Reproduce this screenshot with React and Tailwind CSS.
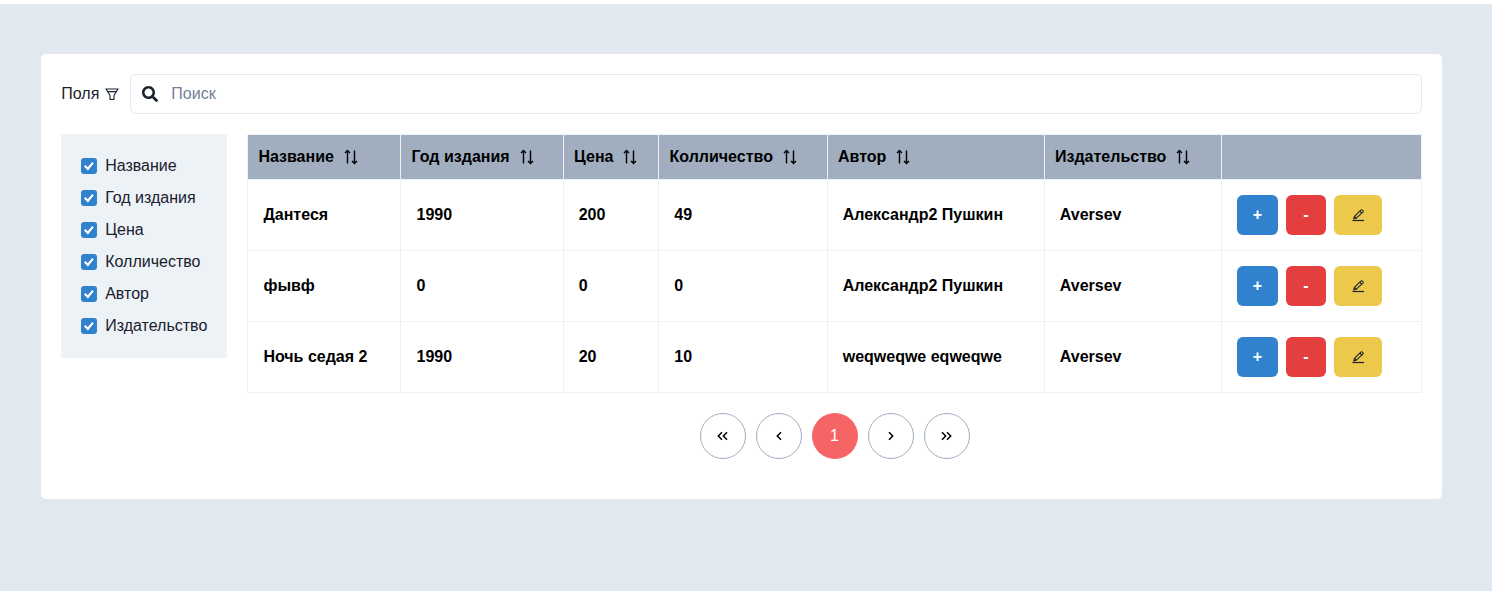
const fields = ['Название', 'Год издания', 'Цена', 'Колличество', 'Автор', 'Издательство']

const columns = [
    { title: 'Название', width: 'w-[153px]', head: 'pl-[10.4px]', cell: 'pl-[15.4px]' },
    { title: 'Год издания', width: 'w-[163px]', head: 'pl-[10.5px]', cell: 'pl-[15.5px]' },
    { title: 'Цена', width: 'w-[95px]', head: 'pl-[10.1px]', cell: 'pl-[14.7px]' },
    { title: 'Колличество', width: 'w-[169px]', head: 'pl-[10.5px]', cell: 'pl-[15.3px]' },
    { title: 'Автор', width: 'w-[217px]', head: 'pl-2.5', cell: 'pl-[14.7px]' },
    { title: 'Издательство', width: 'w-[177px]', head: 'pl-2.5', cell: 'pl-[14.8px]' },
]

const rows = [
    ['Дантеся', '1990', '200', '49', 'Александр2 Пушкин', 'Aversev'],
    ['фывф', '0', '0', '0', 'Александр2 Пушкин', 'Aversev'],
    ['Ночь седая 2', '1990', '20', '10', 'weqweqwe eqweqwe', 'Aversev'],
]

const SortIcon = () => (
    <svg width="16" height="16" viewBox="0 0 16 16" fill="none" stroke="#000" strokeWidth="1.4" className="ml-[9px]">
        <path d="M4.500 14.500V1.500M2 4l2.500-2.500L7 4" />
        <path d="M11.500 1.500v13M9 12l2.500 2.500L14 12" />
    </svg>
)

const FilterIcon = () => (
    <svg width="14" height="14" viewBox="0 0 14 14" fill="none" stroke="#1a202c" strokeWidth="1.100" className="ml-[6px]">
        <path d="M1 2h12L9 8.500v4H5v-4zM2.600 4.600h8.800" />
    </svg>
)

const SearchIcon = () => (
    <svg width="16" height="16" viewBox="0 0 512 512" fill="#1a202c">
        <path d="M505 442.700L405.300 343c-4.500-4.500-10.600-7-17-7H372c27.600-35.300 44-79.700 44-128C416 93.100 322.900 0 208 0S0 93.100 0 208s93.100 208 208 208c48.300 0 92.700-16.400 128-44v16.300c0 6.400 2.500 12.500 7 17l99.700 99.700c9.400 9.400 24.600 9.400 33.900 0l28.300-28.300c9.400-9.400 9.400-24.600.1-34zM208 336c-70.700 0-128-57.200-128-128 0-70.700 57.200-128 128-128 70.700 0 128 57.200 128 128 0 70.700-57.200 128-128 128z" />
    </svg>
)

const PencilIcon = () => (
    <svg width="14" height="14" viewBox="0 0 14 14" fill="none" stroke="#1a202c" strokeWidth="1.100">
        <path d="M2.800 10.800l.5-2.300L9.800 2.100c.5-.5 1.100-.5 1.600 0l.5.5c.5.500.5 1.100 0 1.600L5.100 10.300z" />
        <path d="M8.800 3.200l2 2M3.400 8.400l2 2" />
        <path d="M1.500 12.500h11.500" strokeWidth="1.200" />
    </svg>
)

const CheckIcon = () => (
    <svg width="16" height="16" viewBox="0 0 16 16" fill="none" stroke="#fff" strokeWidth="2.200" strokeLinecap="square">
        <path d="M4.500 8.500l2.400 2.300 4.400-5.300" />
    </svg>
)

const Chevrons = ({ left, double }) => (
    <svg width={double ? 11 : 6} height="10" viewBox={double ? '0 0 11 10' : '0 0 6 10'} fill="none" stroke="#000" strokeWidth="1.500">
        {left ? <path d="M5 1.200L1.300 5 5 8.800" /> : <path d="M1 1.200L4.700 5 1 8.800" />}
        {double && (left ? <path d="M10 1.200L6.300 5 10 8.800" /> : <path d="M6 1.200L9.700 5 6 8.800" />)}
    </svg>
)

const PagerButton = ({ children, active }) => (
    <button
        type="button"
        className={`w-[46px] h-[46px] rounded-full flex items-center justify-center text-base ${active ? 'bg-[#f56565] text-white' : 'border border-[#a0aec0] bg-white text-black'}`}
    >
        {children}
    </button>
)

const App = () => {
    return (
        <div className="h-[591px] pt-1 bg-white overflow-hidden font-['Liberation_Sans',sans-serif] text-base text-[#1a202c]">
            <div className="h-full bg-[#e2e8f0] pt-[50px] pl-[41px] pr-[50px]">
                <div className="h-[445px] bg-white rounded-[5px] p-5">
                    {/* top bar with fields toggle and search */}
                    <div className="flex items-center h-10">
                        <span className="flex items-center w-[69px] shrink-0 pl-[0.3px]">
                            Поля
                            <FilterIcon />
                        </span>
                        <div className="flex-1 flex items-center h-10 border border-[#e2e8f0] rounded-md pl-[11px]">
                            <SearchIcon />
                            <input
                                type="text"
                                placeholder="Поиск"
                                className="ml-[13.3px] flex-1 outline-none placeholder:text-[#718096]"
                            />
                        </div>
                    </div>

                    <div className="flex items-start mt-5">
                        {/* column checkboxes */}
                        <div className="w-[166px] h-[224px] shrink-0 bg-[#edf2f7] px-5 pt-4">
                            {fields.map((f) => (
                                <label key={f} className="flex items-center h-8">
                                    <span className="w-4 h-4 rounded-[3px] bg-[#3182ce] flex items-center justify-center">
                                        <CheckIcon />
                                    </span>
                                    <span className="ml-[8.2px]">{f}</span>
                                </label>
                            ))}
                        </div>

                        <div className="ml-5 flex-1">
                            <table className="w-[1175px] table-fixed border-collapse">
                                <thead>
                                    <tr className="h-[45px]">
                                        {columns.map((c) => (
                                            <th key={c.title} className={`${c.width} ${c.head} bg-[#a0aec0] border border-[#edf2f7] text-left text-black font-bold`}>
                                                <span className="flex items-center">
                                                    {c.title}
                                                    <SortIcon />
                                                </span>
                                            </th>
                                        ))}
                                        <th className="bg-[#a0aec0] border border-[#edf2f7]"></th>
                                    </tr>
                                </thead>
                                <tbody>
                                    {rows.map((row, i) => (
                                        <tr key={i} className="h-[71px]">
                                            {row.map((cell, j) => (
                                                <td key={j} className={`${columns[j].cell} border border-[#edf2f7] font-bold text-black`}>{cell}</td>
                                            ))}
                                            <td className="border border-[#edf2f7] px-[15px]">
                                                <div className="flex gap-2 text-white font-bold">
                                                    <button type="button" className="w-[41px] h-10 rounded-md bg-[#3182ce]">+</button>
                                                    <button type="button" className="w-10 h-10 rounded-md bg-[#e53e3e]">-</button>
                                                    <button type="button" className="w-12 h-10 rounded-md bg-[#ecc94b] flex items-center justify-center">
                                                        <PencilIcon />
                                                    </button>
                                                </div>
                                            </td>
                                        </tr>
                                    ))}
                                </tbody>
                            </table>

                            <div className="flex justify-center gap-[10px] mt-5">
                                <PagerButton><Chevrons left double /></PagerButton>
                                <PagerButton><Chevrons left /></PagerButton>
                                <PagerButton active>1</PagerButton>
                                <PagerButton><Chevrons /></PagerButton>
                                <PagerButton><Chevrons double /></PagerButton>
                            </div>
                        </div>
                    </div>
                </div>
            </div>
        </div>
    )
}

export default App
